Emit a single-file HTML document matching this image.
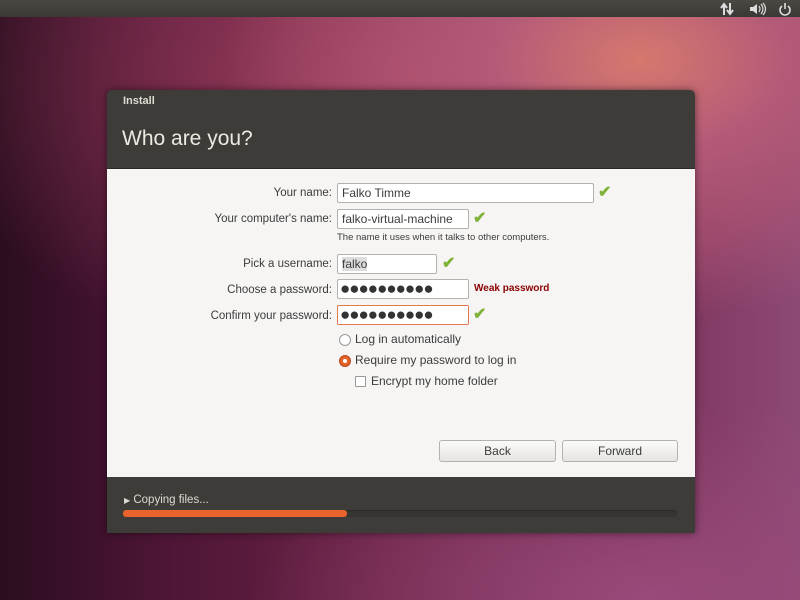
<!DOCTYPE html>
<html><head><meta charset="utf-8"><style>
*{margin:0;padding:0;box-sizing:border-box}
body{width:800px;height:600px;overflow:hidden;position:relative;font-family:"Liberation Sans",sans-serif;
background:radial-gradient(ellipse 420px 260px at 640px 60px,#d6786e 0%,#b45a78 35%,rgba(150,60,100,0) 100%),
radial-gradient(ellipse 500px 300px at 420px 80px,#a0405f 0%,rgba(120,40,80,0) 100%),
radial-gradient(ellipse 400px 200px at 650px 600px,#9a4a7a 0%,rgba(100,40,80,0) 100%),
linear-gradient(90deg,#2a0d1f 0%,#4d1535 20%,#6d2447 50%,#7a3058 80%,#8d4a75 100%);}
#panel{position:absolute;left:0;top:0;width:800px;height:17px;background:linear-gradient(#4a4843,#3a3935);}
#win{position:absolute;left:107px;top:90px;width:588px;height:443px;background:#3d3c38;border-radius:5px 5px 0 0;box-shadow:0 0 8px rgba(0,0,0,.5)}
.t{position:absolute;color:#dfdbd2;font-size:11px;font-weight:bold;left:16px;top:5px}
.h{position:absolute;color:#eeeae2;font-size:21px;left:15px;top:37px}
#body{position:absolute;left:0;top:78px;width:588px;height:309px;background:#f6f5f4;border-top:1px solid #2a2925}
.l{position:absolute;right:363px;font-size:11.5px;color:#3c3c3c;text-align:right;white-space:nowrap}
.in{position:absolute;height:20px;border:1px solid #b5b2ad;background:#fff;border-radius:2px;font-size:12px;color:#3c3c3c;padding:2px 4px;white-space:nowrap;overflow:hidden}
.ck{position:absolute;color:#7fb239;font-size:16px;font-weight:bold}
.dots{font-size:17px;line-height:15px;padding:1px 2px;color:#333;letter-spacing:-1px}
.btn{position:absolute;height:22px;border:1px solid #b5b2ad;border-radius:3px;background:linear-gradient(#fbfbfa,#e6e4e1);font-size:12px;color:#3c3c3c;text-align:center;line-height:20px}
.s{position:absolute;font-size:12px;color:#3c3c3c}
</style></head><body>
<div id="panel">
<svg style="position:absolute;left:720px;top:2px" width="80" height="14" viewBox="0 0 80 14" fill="#ddd" stroke="#ddd">
<path d="M4 13V3M1 6l3-4 3 4" fill="none" stroke-width="2"/><path d="M10 1v10M7 8l3 4 3-4" fill="none" stroke-width="2"/>
<path d="M30 5h3l4-3v10l-4-3h-3z" stroke="none"/><path d="M39 4q2 3 0 6M41 2q4 5 0 10M43 1q5 6 0 12" fill="none" stroke-width="1.2"/>
<path d="M62 4a5 5 0 1 0 6 0" fill="none" stroke-width="1.6"/><path d="M65 1v6" stroke-width="1.6"/>
</svg></div>
<div id="win">
<div class="t">Install</div>
<div class="h">Who are you?</div>
<div id="body">
<div class="l" style="top:18px">Your name:</div>
<div class="in" style="left:230px;top:14px;width:257px">Falko Timme</div><div class="ck" style="left:491px;top:13px">✔</div>
<div class="l" style="top:44px">Your computer's name:</div>
<div class="in" style="left:230px;top:40px;width:132px">falko-virtual-machine</div><div class="ck" style="left:366px;top:39px">✔</div>
<div class="s" style="left:230px;top:63px;font-size:9.5px">The name it uses when it talks to other computers.</div>
<div class="l" style="top:89px">Pick a username:</div>
<div class="in" style="left:230px;top:85px;width:100px"><span style="background:#ddd">falko</span></div><div class="ck" style="left:335px;top:84px">✔</div>
<div class="l" style="top:115px">Choose a password:</div>
<div class="in dots" style="left:230px;top:110px;width:132px">●●●●●●●●●●</div>
<div class="s" style="left:367px;top:114px;font-size:10px;font-weight:bold;color:#8b0000">Weak password</div>
<div class="l" style="top:141px">Confirm your password:</div>
<div class="in dots" style="left:230px;top:136px;width:132px;border-color:#e07a4a">●●●●●●●●●●</div><div class="ck" style="left:366px;top:135px">✔</div>
<div style="position:absolute;left:232px;top:165px;width:12px;height:12px;border:1px solid #999;border-radius:50%;background:#fff"></div>
<div class="s" style="left:248px;top:163px">Log in automatically</div>
<div style="position:absolute;left:232px;top:186px;width:12px;height:12px;border-radius:50%;background:#e2622a;border:1px solid #b84a1c"><div style="width:4px;height:4px;background:#fff;border-radius:50%;margin:3px"></div></div>
<div class="s" style="left:248px;top:184px">Require my password to log in</div>
<div style="position:absolute;left:248px;top:207px;width:11px;height:11px;border:1px solid #999;background:#fff;border-radius:1px"></div>
<div class="s" style="left:264px;top:205px">Encrypt my home folder</div>
<div class="btn" style="left:332px;top:271px;width:117px">Back</div>
<div class="btn" style="left:455px;top:271px;width:116px">Forward</div>
</div>
<div class="s" style="left:17px;top:404px;color:#dfdbd2;font-size:11.5px"><span style="font-size:8px">▶</span> Copying files...</div>
<div style="position:absolute;left:16px;top:420px;width:554px;height:7px;border-radius:3px;background:#353430;border-top:1px solid #2a2925"></div>
<div style="position:absolute;left:16px;top:420px;width:224px;height:7px;border-radius:3px;background:#e9642c"></div>
</div>
</body></html>
